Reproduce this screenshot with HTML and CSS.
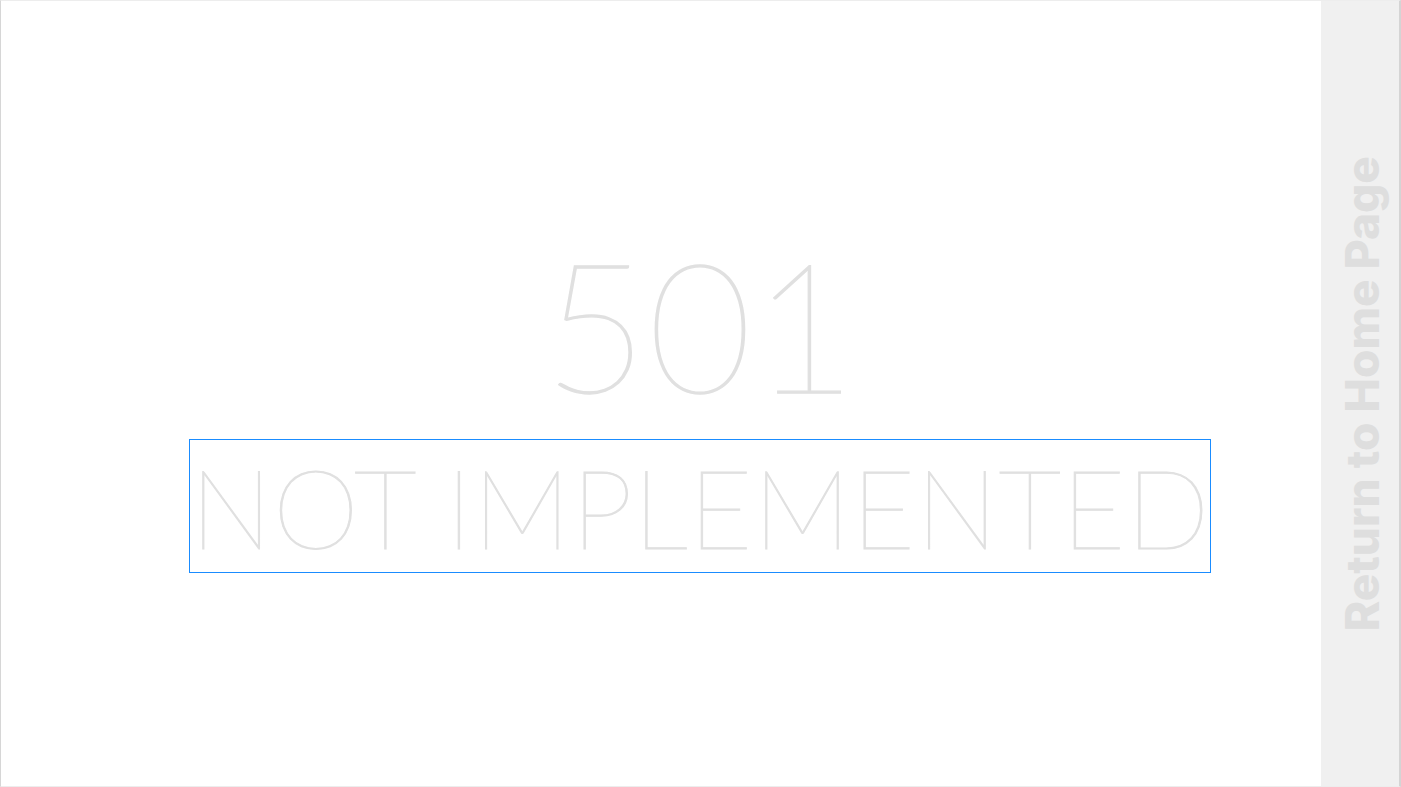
FILE: index.html
```html
<!DOCTYPE html>
<html lang="en">
<head>
<meta charset="utf-8">
<title>501 Not Implemented</title>
<link rel="stylesheet" href="styles.css">
</head>
<body>
<div class="frame">
  <main class="error">
    <h1 class="error-code">501</h1>
    <h2 class="error-text">NOT IMPLEMENTED</h2>
  </main>
  <aside class="sidebar">
    <a class="home-link" href="#">Return to Home Page</a>
  </aside>
</div>
</body>
</html>
```
FILE: styles.css
```css
html, body {
  margin: 0;
  padding: 0;
  height: 100%;
  background: #ffffff;
}

.frame {
  box-sizing: border-box;
  height: 100vh;
  position: relative;
  border-top: 1px solid #ededed;
  border-bottom: 1px solid #ededed;
  border-left: 1px solid #d6d6d6;
  border-right: 2px solid #d4d4d4;
  display: flex;
  align-items: center;
  justify-content: center;
}

.error {
  display: flex;
  flex-direction: column;
  align-items: center;
  gap: 8px;
  font-family: Lato, "Liberation Sans", sans-serif;
  font-weight: 100;
  color: #e0e0e0;
}

.error-code {
  margin: 0;
  font-size: 180px;
  font-weight: 100;
  line-height: normal;
  -webkit-text-stroke: 1.3px #e0e0e0;
}

.error-text {
  margin: 0;
  padding: 0;
  font-size: 110px;
  font-weight: 100;
  line-height: normal;
  letter-spacing: 0.4px;
  border: 1px solid #1a8cff;
  white-space: nowrap;
  -webkit-text-stroke: 1px #e0e0e0;
}

.sidebar {
  position: absolute;
  top: 0;
  right: 0;
  bottom: 0;
  width: 78px;
  background: #f0f0f0;
  display: flex;
  align-items: center;
  justify-content: center;
}

.home-link {
  writing-mode: vertical-rl;
  transform: rotate(180deg);
  font-family: Inter, "Open Sans", sans-serif;
  font-weight: 800;
  font-size: 46px;
  line-height: 1;
  color: #dedede;
  text-decoration: none;
  white-space: nowrap;
  padding-right: 3px;
}
```
